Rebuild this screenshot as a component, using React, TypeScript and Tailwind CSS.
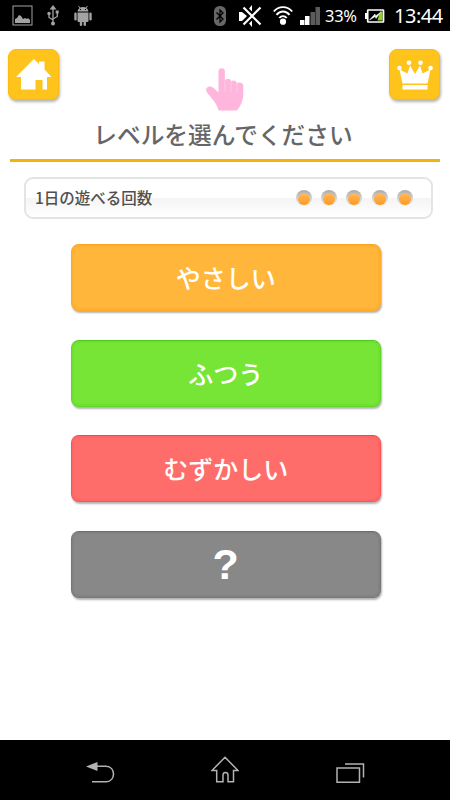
import { clsx } from "clsx";

const levels = [
  { label: "やさしい", style: "bg-[#ffb63a] border-[#ffa929] border-t-[#f7a31f]", inner: "border-[#ffb033]", text: "text-[25px] font-medium" },
  { label: "ふつう", style: "bg-[#77e536] border-[#5fd827] border-t-[#4fc81c]", inner: "border-[#6fe030]", text: "text-[25px] font-medium" },
  { label: "むずかしい", style: "bg-[#ff6d6b] border-[#fb5654] border-t-[#f04644]", inner: "border-[#ff6766]", text: "text-[25px] font-medium" },
  { label: "?", style: "bg-[#888888] border-[#767676] border-t-[#6b6b6b]", inner: "border-[#828282]", text: "font-['Liberation_Sans',sans-serif] text-[43px] font-bold" },
];

const PictureIcon = () => (
  <svg width="21" height="21" viewBox="0 0 21 21" fill="none">
    <rect x="1" y="1" width="19" height="19" stroke="#a3a3a3" />
    <path d="M3 18v-4l2-1 2-3 2 1 2 3 2-1 2 1 1-1 2 2v3z" fill="#a3a3a3" />
  </svg>
);

const UsbIcon = () => (
  <svg width="12" height="21" viewBox="0 0 12 21" fill="none" stroke="#a3a3a3" strokeWidth="1.3">
    <path d="M6 3v14M2 9v3.5l4 2.500M10.300 8v3.500L6 14" />
    <path d="M6 0l3.500 4.500h-7z" fill="#a3a3a3" stroke="none" />
    <circle cx="6" cy="18.500" r="2" fill="#a3a3a3" stroke="none" />
    <circle cx="2" cy="8.500" r="1.700" fill="#a3a3a3" stroke="none" />
    <path d="M8.700 5.500h3v3h-3z" fill="#a3a3a3" stroke="none" />
  </svg>
);

const AndroidIcon = () => (
  <svg width="18" height="21" viewBox="0 0 18 21" fill="#a3a3a3">
    <path d="M4.500 1l1.500 2M13.500 1l-1.500 2" stroke="#a3a3a3" />
    <path fillRule="evenodd" d="M3.500 6.500C4 3.500 6 2 9 2s5 1.500 5.500 4.500zM6 4v1h1V4zm5 0v1h1V4z" />
    <path d="M3.500 7.500h11v8.500q0 1-1 1h-1.500v3q0 1-1.200 1t-1.200-1v-3H8.200v3q0 1-1.200 1t-1.200-1v-3H4.500q-1 0-1-1z" />
    <rect x="0.300" y="7.500" width="2.400" height="8" rx="1.200" />
    <rect x="15.300" y="7.500" width="2.400" height="8" rx="1.200" />
  </svg>
);

const BluetoothIcon = () => (
  <svg width="12" height="20" viewBox="0 0 12 20" fill="none">
    <rect width="12" height="20" rx="5.500" fill="#676767" />
    <path d="M2.500 6.500l6.500 6.500-3 3V4l3 3-6.500 6.500" stroke="#000" strokeWidth="1.300" />
  </svg>
);

const MuteIcon = () => (
  <svg width="23" height="22" viewBox="0 0 23 22" fill="#fff">
    <path d="M0 7h3l5 4-5 5H0zM10 3.500L13 0v6.500zM10 18.500L13 22v-6.500z" />
    <path d="M4.500 2.500l17 17M21.500 2.500l-17 17" stroke="#fff" strokeWidth="2.200" />
  </svg>
);

const WifiIcon = () => (
  <svg width="20" height="19" viewBox="0 0 20 19" fill="none" stroke="#fff" strokeWidth="1.900">
    <path d="M0.800 5.500C5.500-.3 14.500-.3 19.200 5.500M3.500 8.800c3.700-4.500 9.300-4.500 13 0M6.300 12c2-2.500 5.400-2.500 7.400 0" />
    <circle cx="10" cy="15.700" r="3.100" fill="#fff" stroke="none" />
  </svg>
);

const SignalIcon = () => (
  <svg width="20" height="18" viewBox="0 0 20 18">
    <path d="M0 13h4.500v5H0zM5 9h4.500v9H5z" fill="#fff" />
    <path d="M10.500 5H15v13h-4.500zM15.500 0H20v18h-4.500z" fill="#5c5c5c" />
  </svg>
);

const BatteryIcon = () => (
  <svg width="20" height="14" viewBox="0 0 20 14" fill="none">
    <path d="M0 4h2v6H0z" fill="#fff" />
    <path d="M12.500 11.500L15 2.500h2.500v9z" fill="#8fd320" />
    <rect x="2.700" y="1" width="15.800" height="12" rx="0.500" stroke="#fff" strokeWidth="1.700" />
    <path d="M4.500 11l5.500-6 .5 2L15.500 3.500l-4.500 6-.7-2z" fill="#fff" stroke="#fff" strokeWidth="0.500" />
  </svg>
);

const StatusBar = () => (
  <div className="flex h-[31px] shrink-0 items-center bg-black font-['Noto_Sans',sans-serif] text-white">
    <div className="flex items-center pl-3">
      <PictureIcon />
      <div className="ml-3.5"><UsbIcon /></div>
      <div className="ml-[15px]"><AndroidIcon /></div>
    </div>
    <div className="ml-auto flex items-center pr-2">
      <BluetoothIcon />
      <div className="ml-[13px]"><MuteIcon /></div>
      <div className="ml-[11px]"><WifiIcon /></div>
      <div className="ml-[7px]"><SignalIcon /></div>
      <span className="ml-[5px] w-[40px] pt-0.5 text-[16.500px] leading-none tracking-[-0.300px]">33%</span>
      <BatteryIcon />
      <span className="ml-[9px] w-[48px] whitespace-nowrap pt-px text-[20px] leading-none tracking-[-0.500px]">13:44</span>
    </div>
  </div>
);

const tile = "flex size-[51px] items-center justify-center rounded-[8px] border border-[#ffbb0d] bg-[#ffc41c] shadow-[1px_2px_3px_rgba(0,0,0,0.3)]";

const Header = () => (
  <header className="mx-2 flex items-start justify-between pt-[18px]">
    <button className={tile} aria-label="ホーム">
      <svg width="36" height="31" viewBox="0 0 36 31" fill="#fff">
        <path d="M18 0l5 5V2.500h5.500v8L35.500 18H31v12.500h-4.500V21h-7v9.500H5V18H0z" />
      </svg>
    </button>
    <svg className="ml-0.5 mt-[18px]" width="38" height="44" viewBox="0 0 38 44" fill="#ffb6dc">
      <path d="M12.500 4.500a3.200 3.200 0 0 1 6.400 0V14c1-3 6-3 6.300.5 1.500-2 5.600-1.200 5.800 2 1.500-2 6.300-1.200 6.300 2V27c0 6-2 11-6.300 16.500H12.500C11 36 5 31 1 25.500-2 21 3 17.500 7 20.500l5.500 5z" />
      <path d="M18.900 14v11M25.200 14.500V25M31 16.500V25" stroke="#ffd0e9" strokeWidth="0.800" />
    </svg>
    <button className={clsx(tile, "mr-0.5")} aria-label="ランキング">
      <svg width="36" height="30" viewBox="0 0 36 30" fill="#fff">
        <path d="M2.500 9.500l8 4L13 5.500l5 8.500 5-8.500 2.500 8 8-4L30.500 23.500h-25zM5.500 25h25v4.500h-25z" />
        <circle cx="2.400" cy="8" r="2.300" />
        <circle cx="12" cy="2.700" r="2.300" />
        <circle cx="23.500" cy="2.700" r="2.300" />
        <circle cx="33.600" cy="8" r="2.300" />
      </svg>
    </button>
  </header>
);

const PlayCount = () => (
  <div className="ml-6 mr-[17px] mt-[15px] flex h-[42px] shrink-0 items-center justify-between rounded-[9px] border-2 border-[#e4e4e4] bg-[linear-gradient(#fff_50%,#f4f4f4_50%,#fff)] pl-[9px] pr-[18px]">
    <span className="text-[15.500px] font-medium text-[#505050]">1日の遊べる回数</span>
    <div className="flex gap-[9.300px]">
      {[1, 2, 3, 4, 5].map(n => (
        <span key={n} className="flex size-4 items-center justify-center rounded-full bg-linear-to-b from-[#aaaaaa] via-[#d0d0d0] to-[#eeeeee]">
          <span className="mt-px size-3 rounded-full bg-linear-to-b from-[#ffba5c] to-[#ff980c]" />
        </span>
      ))}
    </div>
  </div>
);

const NavBar = () => (
  <nav className="flex h-[60px] shrink-0 items-start bg-black">
    <svg className="ml-[86px] mt-[22px]" width="29" height="22" viewBox="0 0 29 22" fill="none" stroke="#b3b3b3" strokeWidth="1.500">
      <path d="M0 4.500L11.500 0v9z" fill="#b3b3b3" stroke="none" />
      <path d="M11 4.200h9c10 0 10 15.600 0 15.600H6" />
    </svg>
    <svg className="ml-24 mt-4" width="28" height="27" viewBox="0 0 28 27" fill="none" stroke="#b3b3b3" strokeWidth="1.500">
      <path d="M14 1.200L27 14.500h-4.500v11.300H17V19c0-3.500-5-3.500-5 0v6.800H5.700V14.500H1z" />
    </svg>
    <svg className="ml-[97px] mt-[23px]" width="29" height="21" viewBox="0 0 29 21" fill="none" stroke="#b3b3b3" strokeWidth="1.500">
      <path d="M1 5h22.500v14.300H1zM9 1h18.500v13.500" />
    </svg>
  </nav>
);

export default function App() {
  return (
    <div className="flex h-[800px] w-[450px] flex-col overflow-hidden bg-white font-['Noto_Sans_CJK_JP',sans-serif]">
      <StatusBar />
      <Header />
      <h1 className="mx-2.5 flex h-[51px] shrink-0 items-center justify-center border-b-3 border-[#f0b40c] pr-1 text-[23.700px] font-medium text-[#666666]">
        レベルを選んでください
      </h1>
      <PlayCount />
      <main className="ml-[71px] mt-[25px] flex flex-1 flex-col gap-[28.600px]">
        {levels.map(level => (
          <button key={level.label} className={clsx("h-[67px] w-[309.500px] rounded-[8px] border shadow-[1px_2px_2px_rgba(0,0,0,0.3)]", level.style)}>
            <span className={clsx("flex h-full items-center justify-center rounded-[7px] border-2 leading-none text-white", level.inner, level.text)}>
              {level.label}
            </span>
          </button>
        ))}
      </main>
      <NavBar />
    </div>
  );
}
